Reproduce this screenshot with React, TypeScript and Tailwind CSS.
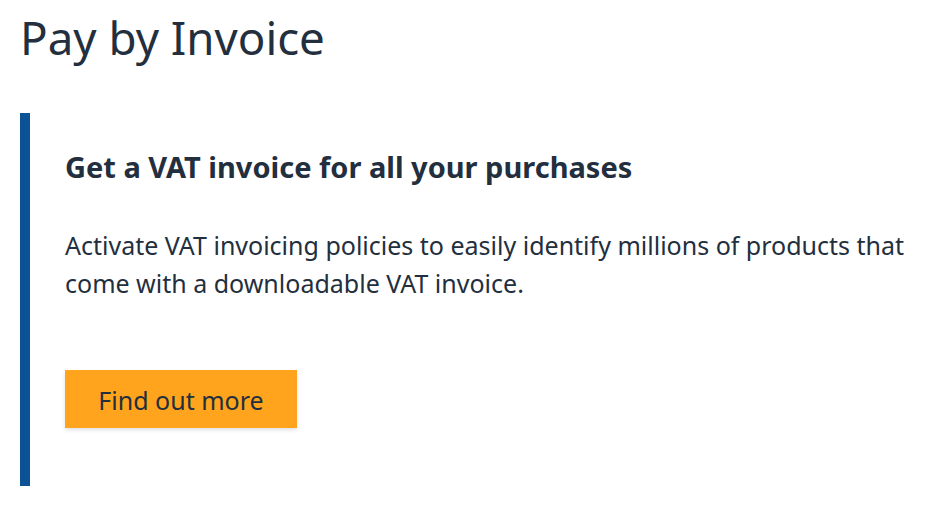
import React from "react";

export default function App() {
  return (
    <div className="min-h-screen bg-white pl-[20px] pt-[9px] text-[#232f3e]" style={{ fontFamily: '"Noto Sans", "Open Sans", sans-serif' }}>
      <h1 className="text-[45.7px] leading-[56px] font-normal">Pay by Invoice</h1>
      <div className="mt-[48px] h-[373px] border-l-[10px] border-[#0b5394] pl-[35px] pt-[34px]">
        <h2 className="text-[29px] font-bold leading-[40px]">Get a VAT invoice for all your purchases</h2>
        <p className="mt-[39px] pr-[10px] text-[25px] leading-[38px]">
          Activate VAT invoicing policies to easily identify millions of products that come with a downloadable VAT invoice.
        </p>
        <button className="mt-[68px] h-[58px] w-[232px] bg-[#ffa41c] pt-[4px] text-[25px] text-[#232f3e] shadow-[0_2px_4px_rgba(0,0,0,0.12)]">
          Find out more
        </button>
      </div>
    </div>
  );
}
